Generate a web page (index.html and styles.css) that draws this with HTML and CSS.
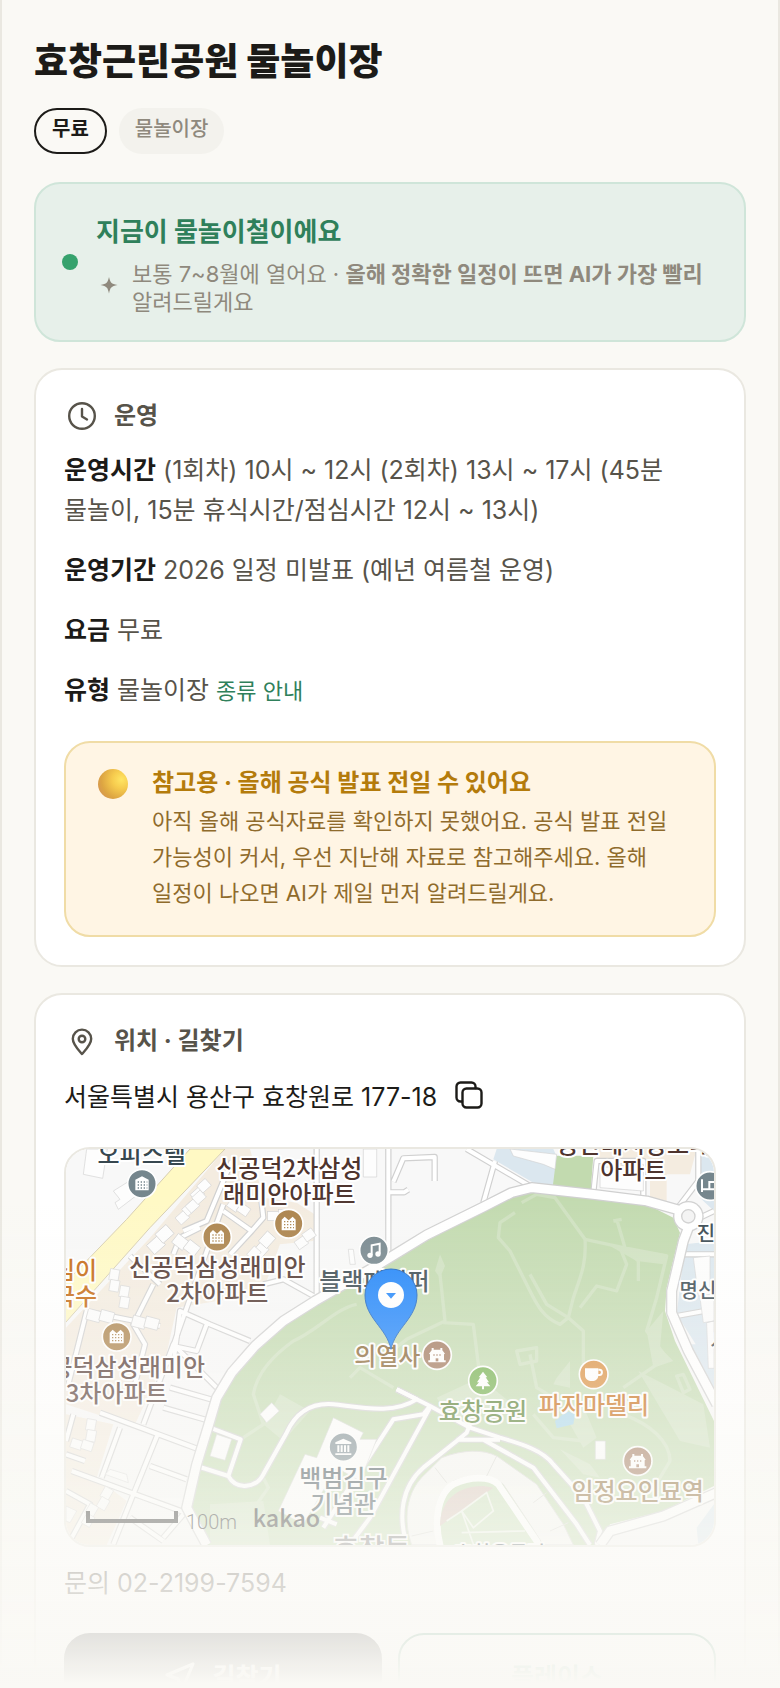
FILE: index.html
```
<!DOCTYPE html>
<html lang="ko">
<head>
  <meta charset="UTF-8" />
  <meta name="viewport" content="width=device-width, initial-scale=1" />
  <title>효창근린공원 물놀이장</title>
  <link rel="stylesheet" href="styles.css">
</head>

<body>
  <main class="page">
    <h1>효창근린공원 물놀이장</h1>
    <div class="chips">
      <span class="chip chip-free">무료</span>
      <span class="chip">물놀이장</span>
    </div>

    <section class="season">
      <span class="season-dot"></span>
      <div class="season-body">
        <h2>지금이 물놀이철이에요</h2>
        <div class="season-note">
          <svg class="spark" viewBox="0 0 26 26" aria-hidden="true"><path d="M13 2 C14.500 8 15 8.500 21.500 10 C15 11.500 14.500 12 13 18.500 C11.500 12 11 11.500 4.500 10 C11 8.500 11.500 8 13 2Z"/></svg>
          <p>보통 7~8월에 열어요 · <b>올해 정확한 일정이 뜨면 AI가 가장 빨리</b> 알려드릴게요</p>
        </div>
      </div>
    </section>

    <section class="card">
      <h2 class="card-title">
        <svg class="icon" viewBox="0 0 36 36" aria-hidden="true"><circle cx="18" cy="18" r="12.800"/><path d="M18 11v7.500l5 3"/></svg>
        운영
      </h2>
      <div class="info">
        <p><b>운영시간</b> (1회차) 10시 ~ 12시 (2회차) 13시 ~ 17시 (45분 물놀이, 15분 휴식시간/점심시간 12시 ~ 13시)</p>
        <p><b>운영기간</b> 2026 일정 미발표 (예년 여름철 운영)</p>
        <p><b>요금</b> 무료</p>
        <p><b>유형</b> 물놀이장 <a href="#types">종류 안내</a></p>
      </div>
      <div class="notice">
        <span class="notice-ball"></span>
        <div>
          <h3>참고용 · 올해 공식 발표 전일 수 있어요</h3>
          <p>아직 올해 공식자료를 확인하지 못했어요. 공식 발표 전일 가능성이 커서, 우선 지난해 자료로 참고해주세요. 올해 일정이 나오면 AI가 제일 먼저 알려드릴게요.</p>
        </div>
      </div>
    </section>

    <section class="card">
      <h2 class="card-title">
        <svg class="icon" viewBox="0 0 36 36" aria-hidden="true"><path d="M18 31 C14 26.500 8.800 21.500 8.800 15.800 A9.200 9.200 0 0 1 27.200 15.800 C27.200 21.500 22 26.500 18 31Z"/><circle cx="18" cy="16" r="3.300"/></svg>
        위치 · 길찾기
      </h2>
      <div class="address">
        <span>서울특별시 용산구 효창원로 177-18</span>
        <button class="copy" type="button" aria-label="주소 복사">
          <svg viewBox="0 0 28 28" aria-hidden="true"><path d="M7 20.500H5.500a4 4 0 0 1-4-4v-11a4 4 0 0 1 4-4h11a4 4 0 0 1 4 4V7"/><rect x="7.500" y="7.500" width="19" height="19" rx="4"/></svg>
        </button>
      </div>

      <div class="map">
        <svg viewBox="48 54 1944 1188" preserveAspectRatio="xMidYMid slice" role="img" aria-label="지도">
          <defs>
            <g id="roads">
              <path d="M1250 54 L1440 165 M1335 90 L1300 215 M1015 54 V372 M1015 184 H1062 L1075 176 M1030 152 L1060 82 L1154 78 V150"/>
              <path d="M800 54 V500 L700 445 L640 460 M1630 185 L1640 90 H1780 V200 M1880 235 L1945 150 V54"/>
              <path d="M350 700 L520 220 M400 300 L470 270 L545 90 M520 240 L605 300 L640 260 L630 170 M370 370 L390 320 L450 290 M605 300 L540 370 M240 375 L330 460"/>
              <path d="M105 540 L330 585 M310 460 L250 580 L285 640 L250 780 M110 540 L50 780 M370 700 L390 540 L480 580 L600 630 M470 580 L440 660 L370 645"/>
              <path d="M150 845 L460 960 M280 880 L370 640 L500 770 M210 890 L155 1040 M325 905 L250 1090 L190 1240 M300 1005 L410 1045 M65 1020 L420 1150 M340 830 L480 870 M360 770 L500 810 M400 1150 L340 1220 M240 1160 L340 1230 M48 930 L70 850 M48 970 L105 990 M48 1080 L120 1120 L60 1230"/>
              <path d="M1895 370 H1992 M1880 555 L1992 535 M1950 260 L1992 240"/>
            </g>
            <g id="paths">
              <path d="M480 890 L572 925 L535 1035 L440 1005 M535 1035 C560 1080 620 1070 640 1030 L710 905 C740 840 790 815 850 820 C940 830 1030 850 1100 805 L1040 775"/>
              <path d="M1040 775 L1140 825 L1260 890 L1350 920 C1420 940 1480 960 1510 1000 L1600 1100 L1650 1200 L1640 1242"/>
              <path d="M1140 825 L1120 850 L1030 865 L820 1190 M1140 830 L960 1160 L900 1240 M1260 880 L1250 905 L1220 930 L1120 1010 C1050 1070 1050 1160 1065 1220 M1220 926 H1350 M1300 926 L1450 1010 L1580 1180 L1620 1242 M810 1160 L860 1180"/>
            </g>
            <g id="homes">
              <rect x="-32" y="6" width="34" height="28"/><rect x="0" y="0" width="34" height="28"/>
            </g>
            <g id="apt">
              <circle class="disc" r="43"/>
              <path class="glyph" d="M-21 20V-12L-12 -21L0 -10L12 -21L21 -12V20Z"/>
              <path class="windows" d="M-14 -6H16 M-14 3H16 M-14 12H16"/>
            </g>
            <g id="house">
              <circle class="disc" r="43"/>
              <path class="glyph" d="M-26 22V16H-21V-2L-24 -4L-16 -14V-21H-10V-16H10V-21H16V-14L24 -4L21 -2V16H26V22Z"/>
              <path class="windows" d="M-11 0H14"/>
              <path class="door" d="M0 10V19"/>
            </g>
          </defs>

          <rect class="land" x="0" y="0" width="2040" height="1300"/>

          <!-- residential blocks -->
          <path class="block" d="M525 54H600L640 200L740 215L810 260L790 330L690 340L650 450L560 500L380 530L345 690L250 890L140 850L48 820V590L300 320Z M48 850L190 880L140 1040L230 1110L170 1242H48Z"/>
          <path class="block" d="M1640 54H1940L1920 130H1850V210L1800 205V130L1640 90Z"/>
          <path class="campus" d="M1340 54H1510L1530 100L1510 168L1450 155L1330 85Z M1955 54H1992V240L1950 200Z M1905 340L1992 330V640L1950 660L1880 550Z M1905 640H1992V780Z M1940 1190L1992 1120V1242H1945Z"/>
          <path class="grass" d="M1520 74H1630L1622 182L1508 168Z"/>
          <path class="highway" d="M420 54H525L300 290L40 582V462L230 265Z"/>

          <!-- park -->
          <path class="grass" d="M1440 180L1400 195L1290 240L1130 330L1000 405L900 465L790 515L720 560L640 630L560 720L510 810L480 890L440 1010L415 1130L470 1260H1640L1680 1180L1840 1140L1992 1065V870L1875 630L1845 540L1850 470L1890 305L1870 260L1800 225L1650 200Z"/>
          <path class="trail-fill" d="M690 790L780 840L700 930L640 880Z M1170 370L1155 420L1170 440L1185 405Z M1680 345L1850 370L1840 400L1760 390Z M1790 600L1840 540L1830 650L1870 690L1810 710Z M1765 720L1960 820L1980 950L1890 930Z M1520 740L1560 690V770L1510 760Z M480 1120L640 1110L660 1242H480Z M1590 800L1640 920L1600 950L1560 880Z M1160 800L1290 740L1400 830L1200 860Z M1530 955L1620 1000L1650 1040L1600 1030Z"/>
          <path class="trail" d="M1415 215L1460 190L1515 200L1605 325C1610 400 1590 440 1570 500L1555 560L1530 580C1480 560 1460 520 1440 480L1380 360L1345 320L1350 275L1395 245"/>
          <path class="trail" d="M1605 325L1720 350L1850 375L1820 500L1790 600L1850 680L1720 770 M1555 560L1600 600V700 M1170 430L1185 570L1070 625L1000 680 M1180 575L1270 580L1290 740 M1440 430L1490 520L1555 560 M1700 265L1725 350L1765 390V450 M1690 270L1715 265 M1590 530L1640 465L1700 480L1730 400L1710 350"/>
          <path class="trail" d="M920 520C860 530 800 600 730 630C660 680 620 730 610 790L640 880L580 920 M640 1040L655 1070L620 1120 M1440 670L1460 770L1510 800 M1400 660L1460 650V690L1410 700Z M1450 850L1510 920L1600 930 M1720 850C1800 880 1860 930 1860 990L1800 1090 M1880 735L1900 730L1920 775L1900 785Z M900 740L930 710L1030 770"/>
          <path class="pond" d="M1515 870L1550 840L1575 850L1570 880L1520 892Z"/>

          <use href="#roads" class="road-edge"/>
          <use href="#roads" class="road"/>
          <use href="#paths" class="road-edge"/>
          <use href="#paths" class="road"/>

          <!-- perimeter road and roundabout -->
          <path class="main-edge" d="M470 1242L410 1130L440 1000L475 885L500 800L545 725L615 645L700 570L795 510L990 398L1130 312L1300 228L1385 185L1445 170L1630 190L1790 210L1890 238M1915 290L1900 330L1865 480V545L1915 660L2000 820M2000 1085L1840 1155L1680 1200L1650 1242"/>
          <circle class="round-edge" cx="1915" cy="256" r="46"/>
          <path class="main" d="M470 1242L410 1130L440 1000L475 885L500 800L545 725L615 645L700 570L795 510L990 398L1130 312L1300 228L1385 185L1445 170L1630 190L1790 210L1890 238M1915 290L1900 330L1865 480V545L1915 660L2000 820M2000 1085L1840 1155L1680 1200L1650 1242"/>
          <circle class="round" cx="1915" cy="256" r="42"/>
          <circle class="round-island" cx="1915" cy="256" r="20"/>

          <!-- buildings -->
          <g class="building">
            <path d="M110 54H172L158 142L100 130Z M190 180L270 130L290 170L205 235L195 215L210 205Z M940 54H980V138H940Z M1380 54L1520 70L1515 115L1480 100L1390 75Z"/>
            <path d="M630 850L665 815L688 840L650 875Z M500 910L545 925L525 988L480 975Z M850 860L940 905L930 925L980 925L930 1050L860 1010L760 1180L685 1140L765 970L800 980Z M1636 930H1666V985H1636Z"/>
            <path d="M1930 380L1980 375V490L1945 495Z M1950 500L1992 490V570L1960 575Z M1970 575L1992 570V712L1975 712Z M895 355H910L916 400H900Z M1650 110L1780 100V180L1650 170Z"/>
            <path d="M165 1030L180 1015L230 1030L235 1055Z M48 1125L80 1140L60 1175L48 1170Z"/>
            <use href="#homes" transform="translate(440 165) rotate(-42)"/>
            <use href="#homes" transform="translate(395 235) rotate(-42)"/>
            <use href="#homes" transform="translate(425 200) rotate(-42)"/>
            <use href="#homes" transform="translate(315 310) rotate(-42) scale(1.300)"/>
            <use href="#homes" transform="translate(575 215) rotate(35)"/>
            <use href="#homes" transform="translate(625 330) rotate(-48) scale(1.200)"/>
            <use href="#homes" transform="translate(420 325) rotate(38) scale(1.200)"/>
            <use href="#homes" transform="translate(590 370) rotate(-48)"/>
            <use href="#homes" transform="translate(685 235)"/>
            <use href="#homes" transform="translate(755 310) rotate(-35)"/>
            <use href="#homes" transform="translate(210 450) rotate(100)"/>
            <use href="#homes" transform="translate(240 500) rotate(100)"/>
            <use href="#homes" transform="translate(155 535) rotate(15) scale(1.200)"/>
            <use href="#homes" transform="translate(290 555) rotate(15) scale(1.200)"/>
            <use href="#homes" transform="translate(140 900) rotate(100)"/>
            <use href="#homes" transform="translate(100 925) rotate(18)"/>
            <use href="#homes" transform="translate(180 1110) rotate(120)"/>
            <use href="#homes" transform="translate(135 1160) rotate(120)"/>
          </g>

          <!-- stadium -->
          <path class="stand" d="M1085 1242C1060 1170 1065 1080 1130 1025L1175 980C1240 955 1300 955 1340 975L1460 1060L1540 1180L1570 1242H1480L1440 1180L1360 1060C1320 1030 1260 1030 1210 1050C1150 1090 1150 1150 1170 1242Z"/>
          <path class="track" d="M1175 1260C1150 1180 1160 1090 1210 1060C1260 1035 1320 1035 1345 1060L1460 1230L1470 1260Z"/>
          <path class="clay" d="M1170 1185C1170 1110 1220 1065 1300 1065L1330 1070Z"/>
          <path class="pitch" d="M1235 1140L1310 1085L1330 1140L1270 1190Z M1190 1170L1235 1140L1270 1240 M1235 1205L1425 1200"/>
          <path class="seam" d="M1155 1010L1190 1055 M1340 975L1310 1035 M1490 1085L1450 1115 M1085 1215L1150 1200 M1555 1175L1500 1200"/>

          <!-- labels -->
          <g class="label">
            <text x="275" y="95" class="slate">오피스텔</text>
            <text x="718" y="137">신공덕2차삼성</text>
            <text x="718" y="215">래미안아파트</text>
            <text x="502" y="435">신공덕삼성래미안</text>
            <text x="502" y="512">2차아파트</text>
            <text x="75" y="445" class="rust">심이</text>
            <text x="75" y="523" class="rust">국수</text>
            <text x="973" y="478" class="slate">블랙페이퍼</text>
            <text x="200" y="735">신공덕삼성래미안</text>
            <text x="200" y="813">3차아파트</text>
            <text x="1752" y="66">용산데시앙포레</text>
            <text x="1750" y="143">아파트</text>
            <text x="1012" y="702" class="ochre">의열사</text>
            <text x="1299" y="867" class="olive">효창공원</text>
            <text x="1632" y="850" class="rust">파자마델리</text>
            <text x="1763" y="1108" class="ochre">임정요인묘역</text>
            <text x="880" y="1067" class="slate">백범김구</text>
            <text x="880" y="1145" class="slate">기념관</text>
          </g>
          <g class="label small slate">
            <text x="1968" y="330">진</text>
            <text x="1944" y="502">명신</text>
            <text x="2008" y="655">서</text>
            <text x="1350" y="1290">효창운동장</text>
          </g>
          <text class="district" x="965" y="1284">효창동</text>

          <!-- place markers -->
          <g class="gray">
            <g transform="translate(276 158)"><circle class="disc" r="43"/><path class="glyph" d="M-20 20V-12L0 -22L20 -12V20Z"/><path class="windows" d="M-13 -5H16 M-13 4H16 M-13 13H16"/></g>
            <g transform="translate(972 358)"><circle class="disc" r="43"/><path class="note" d="M-7 14V-15L17 -20V10"/><circle class="glyph" cx="-12" cy="15" r="8"/><circle class="glyph" cx="12" cy="11" r="8"/></g>
            <g transform="translate(880 948)"><circle class="disc" r="43"/><path class="glyph" d="M-24 -9V-14L0 -25L24 -14V-9Z M-18 -5H-12V15H-18Z M-8 -5H-2V15H-8Z M2 -5H8V15H2Z M12 -5H18V15H12Z M-24 19H24V24H-24Z"/></g>
            <g transform="translate(1980 165)"><circle class="disc" r="43"/><path class="note" d="M-24 -20V18 M-24 10H24V-12H-2V8"/></g>
          </g>
          <g class="brown">
            <use href="#apt" x="501" y="318"/>
            <use href="#apt" x="716" y="278"/>
            <use href="#apt" x="200" y="617"/>
          </g>
          <g class="umber">
            <use href="#house" x="1161" y="672"/>
            <use href="#house" x="1763" y="990"/>
          </g>
          <g class="leaf" transform="translate(1299 749)"><circle class="disc" r="43"/><path class="glyph" d="M0 -27L13 -10H8L18 5H12L22 17H3V26H-3V17H-22L-12 5H-18L-8 -10H-13Z"/></g>
          <g class="orange" transform="translate(1631 730)"><circle class="disc" r="43"/><path class="glyph" d="M-26 -18H14V2C14 14 6 20 -5 20C-17 20 -26 14 -26 2Z"/><path class="note" d="M14 -14H18C27 -14 27 2 18 2H13"/></g>

          <!-- current place pin -->
          <path class="pin" d="M1023 655C1010 590 945 562 945 492A78 78 0 0 1 1101 492C1101 562 1036 590 1023 655Z"/>
          <circle class="pin-eye" cx="1023" cy="492" r="39"/>
          <path class="pin-arrow" d="M1008 486H1038L1023 503Z"/>

          <path class="scale" d="M114 1140V1170H378V1140"/>
          <text class="scale-text" x="408" y="1194">100m</text>
          <text class="brand" x="608" y="1188">kakao</text>
        </svg>
      </div>

      <p class="contact">문의 02-2199-7594</p>
      <div class="actions">
        <a class="btn btn-dark" href="#route">
          <svg viewBox="0 0 32 32" aria-hidden="true"><path d="M29 3L3 14L14 18L18 29Z"/></svg>
          길찾기
        </a>
        <a class="btn" href="#place">플레이스</a>
      </div>
    </section>
  </main>
  <div class="fade"></div>
</body>
</html>
```
FILE: styles.css
```
* {
  box-sizing: border-box;
}

body {
  margin: 0;
  background: #faf9f5;
  color: #1c1b18;
  font-family: Inter, "Noto Sans CJK KR", sans-serif;
  font-size: 25px;
  line-height: 40px;
  word-break: keep-all;
}

h1, h2, h3, p {
  margin: 0;
}

.page {
  height: 100vh;
  overflow: hidden;
  padding: 36px 32px 0;
  border-left: 2px solid #eae8e1;
  border-right: 2px solid #eae8e1;
}

h1 {
  font-size: 37px;
  line-height: 52px;
  font-weight: 800;
}

.chips {
  display: flex;
  gap: 12px;
  margin: 20px 0 28px;
}

.chip {
  height: 46px;
  padding: 0 16px;
  border-radius: 23px;
  background: #f3f2ed;
  color: #8f897d;
  font-size: 20px;
  line-height: 42px;
  font-weight: 500;
}

.chip-free {
  border: 2px solid #1c1b18;
  background: none;
  color: #1c1b18;
  font-weight: 600;
  line-height: 38px;
}

.season {
  display: flex;
  align-items: center;
  gap: 18px;
  padding: 24px 26px;
  border: 2px solid #cfe5d9;
  border-radius: 26px;
  background: #e7f0ea;
}

.season-dot {
  flex: none;
  width: 16px;
  height: 16px;
  border-radius: 50%;
  background: #36a26d;
}

.season h2 {
  color: #2f805b;
  font-size: 26px;
  line-height: 48px;
  font-weight: 700;
}

.season-note {
  display: flex;
  align-items: center;
  gap: 10px;
  margin-top: 4px;
  color: #8f897d;
  font-size: 22px;
  line-height: 28px;
}

.spark {
  flex: none;
  width: 26px;
  height: 26px;
  fill: #8f897d;
}

.card {
  margin-top: 26px;
  padding: 28px;
  border: 2px solid #eae8e1;
  border-radius: 28px;
  background: #fff;
}

.card-title {
  display: flex;
  align-items: center;
  gap: 14px;
  margin-bottom: 16px;
  color: #57534a;
  font-size: 24px;
  line-height: 36px;
  font-weight: 700;
}

.icon {
  width: 36px;
  height: 36px;
  fill: none;
  stroke: #57534a;
  stroke-width: 2.4;
  stroke-linecap: round;
  stroke-linejoin: round;
}

.info {
  display: grid;
  gap: 20px;
  color: #57534a;
}

.info b {
  color: #1c1b18;
  font-weight: 700;
}

.info a {
  color: #2f805b;
  font-size: 22px;
  text-decoration: none;
}

.notice {
  display: flex;
  gap: 24px;
  margin-top: 30px;
  padding: 24px 32px;
  border: 2px solid #f0dca6;
  border-radius: 26px;
  background: #fff5e4;
}

.notice-ball {
  flex: none;
  width: 30px;
  height: 30px;
  margin-top: 2px;
  border-radius: 50%;
  background: radial-gradient(circle at 78% 35%, #ffe563 0, #f6cb4e 30%, #dda542 65%, #cf8a5e 100%);
}

.notice h3 {
  margin-bottom: 4px;
  color: #b47b0b;
  font-size: 24px;
  line-height: 32px;
  font-weight: 700;
}

.notice p {
  color: #8f6b2c;
  font-size: 22px;
  line-height: 36px;
}

.address {
  display: flex;
  align-items: center;
  gap: 16px;
  line-height: 44px;
}

.copy {
  width: 32px;
  height: 36px;
  padding: 2px 2px 6px;
  border: 0;
  background: none;
}

.copy svg {
  display: block;
  width: 28px;
  height: 28px;
  fill: none;
  stroke: #1c1b18;
  stroke-width: 2.4;
  stroke-linecap: round;
}

.map {
  height: 400px;
  margin-top: 28px;
  overflow: hidden;
  border: 2px solid #eae8e1;
  border-radius: 26px;
}

.map svg {
  display: block;
  width: 100%;
  height: 100%;
}

.land { fill: #f8f8f8; }
.block { fill: #f4ece0; }
.campus { fill: #dbe7ef; }
.grass { fill: #c2daaf; }
.highway { fill: #fff9c4; stroke: #d6cdb0; stroke-width: 3; }
.pond { fill: #a6d5ea; }

.road-edge, .road, .main-edge, .main, .trail {
  fill: none;
  stroke-linejoin: round;
}

.road-edge { stroke: #d0d0d0; stroke-width: 19; }
.road { stroke: #fff; stroke-width: 12; }
.main-edge { stroke: #d0d0d0; stroke-width: 34; }
.main { stroke: #fff; stroke-width: 26; }
.trail { stroke: #cfe1c0; stroke-width: 10; }
.trail-fill { fill: #cfe1c0; }
.round { fill: #fff; }
.round-edge { fill: #d0d0d0; }
.round-island { fill: #f4f4f4; stroke: #d0d0d0; stroke-width: 4; }

.building {
  fill: #fdfdfd;
  stroke: #d3d3d3;
  stroke-width: 2;
}

.stand { fill: #f6f6f3; stroke: #d9d9d5; stroke-width: 3; }
.track { fill: #c9dfb9; stroke: #fff; stroke-width: 20; }
.clay { fill: #d8c4ba; }
.pitch { fill: none; stroke: #eef4e9; stroke-width: 5; }
.seam { stroke: #d9d9d5; stroke-width: 3; }

.disc { fill: currentColor; stroke: #fff; stroke-width: 5; }
.glyph { fill: #fff; }
.note { fill: none; stroke: #fff; stroke-width: 6; }
.windows { fill: none; stroke: currentColor; stroke-width: 4; stroke-dasharray: 4 5; }
.door { stroke: currentColor; stroke-width: 8; }
.gray { color: #75868d; }
.brown { color: #ab824a; }
.umber { color: #9f7458; }
.leaf { color: #6fae48; }
.orange { color: #d98a36; }

.label {
  fill: #4e342e;
  stroke: #fff;
  stroke-width: 12;
  stroke-linejoin: round;
  paint-order: stroke;
  font-family: "Noto Sans CJK KR", sans-serif;
  font-size: 72px;
  font-weight: 500;
  text-anchor: middle;
}

.small { font-size: 60px; }
.slate { fill: #37474f; }
.rust { fill: #c4650a; }
.ochre { fill: #84602c; }
.olive { fill: #4e7826; }

.district {
  fill: #777;
  stroke: #fff;
  stroke-width: 10;
  paint-order: stroke;
  font-family: "Noto Sans CJK KR", sans-serif;
  font-size: 84px;
  font-weight: 500;
  text-anchor: middle;
}

.pin { fill: #1a82fb; stroke: #1560c0; stroke-width: 3; }
.pin-eye { fill: #fff; }
.pin-arrow { fill: #1a82fb; }

.scale { fill: none; stroke: #222; stroke-width: 12; }

.scale-text {
  fill: #222;
  font-family: Roboto, sans-serif;
  font-size: 60px;
  font-weight: 300;
}

.brand {
  fill: #222;
  font-family: "Noto Sans CJK KR", sans-serif;
  font-size: 70px;
  font-weight: 500;
}

.contact {
  margin-top: 16px;
  color: #57534a;
}

.actions {
  display: grid;
  grid-template-columns: 1fr 1fr;
  gap: 16px;
  margin-top: 30px;
}

.btn {
  display: flex;
  align-items: center;
  justify-content: center;
  gap: 16px;
  height: 88px;
  border: 2px solid #2f805b;
  border-radius: 26px;
  color: #2f805b;
  font-weight: 700;
  text-decoration: none;
}

.btn-dark {
  border-color: #1c1b18;
  background: #1c1b18;
  color: #fff;
}

.btn svg {
  width: 32px;
  height: 32px;
  fill: none;
  stroke: #fff;
  stroke-width: 3;
  stroke-linejoin: round;
}

.fade {
  position: fixed;
  right: 0;
  bottom: 0;
  left: 0;
  height: 500px;
  background: linear-gradient(rgba(250, 249, 245, 0), #faf9f5 99%);
  pointer-events: none;
}
```
